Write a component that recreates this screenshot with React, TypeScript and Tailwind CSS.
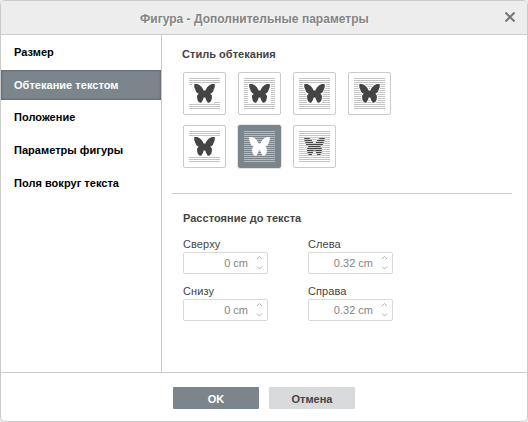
import React from "react";

const BUTTERFLY =
  "M.3 0H3.200Q6 .8 7.600 3Q9 4.800 9.600 6.500H11.400Q12 4.800 13.400 3Q15 .8 17.800 0H20.700Q21.200 2.500 20 5Q19.200 8.200 17.300 9.300L16.200 9.800Q18.200 10.800 18 13Q17.900 16 16.300 18Q14.800 19.200 13.600 18.400Q12 16.800 11.300 13.500H9.700Q9 16.800 7.400 18.400Q6.200 19.200 4.700 18Q3.100 16 3 13Q2.800 10.800 4.800 9.800L3.700 9.300Q1.800 8.200 1 5Q-.2 2.500 .3 0Z";

type Kind = "inline" | "square" | "tight" | "through" | "topbottom" | "front" | "behind";
const kinds: Kind[] = ["inline", "square", "tight", "through", "topbottom", "front", "behind"];

function WrapIcon({ kind }: { kind: Kind }) {
  const active = kind === "front";
  const lines: [number, number, number][] = [];
  for (let i = 0; i < 16; i++) {
    const middle = i >= 3 && i <= 12;
    if (!middle || kind === "tight" || kind === "through" || active || kind === "behind") {
      lines.push([0, i * 2, 31]);
    } else if (kind === "square") {
      lines.push([0, i * 2, 4], [27, i * 2, 4]);
    } else if (kind === "inline" && i === 3) {
      lines.push([0, 6, 3]);
    } else if (kind === "inline" && i === 12) {
      lines.push([25, 24, 6]);
    }
  }
  return (
    <svg width="31" height="31" viewBox="0 0 31 31">
      {lines.map(([x, y, w]) => (
        <rect key={`${x}-${y}`} x={x} y={y} width={w} height="1" fill={active ? "#b5babf" : "#c3c3c3"} />
      ))}
      <g transform="translate(5 6)">
        {kind === "tight" && <path d="M-1 -1H22V3L18.500 11L18 19.500H3L2.500 11L-1 3Z" fill="#fff" />}
        {kind === "through" && <path d={BUTTERFLY} fill="#fff" stroke="#fff" strokeWidth="2" />}
        <path d={BUTTERFLY} fill={active ? "#fff" : "#444"} />
      </g>
      {kind === "behind" &&
        Array.from({ length: 10 }, (_, i) => (
          <rect key={i} x="4" y={6 + i * 2} width="23" height="1" fill="#cbcbcb" />
        ))}
    </svg>
  );
}

function Spinner({ label, value }: { label: string; value: string }) {
  return (
    <label className="block w-[85px]">
      <span className="block h-[15px] text-[11px] leading-[14px] tracking-[0.1px] text-[#444]">{label}</span>
      <span className="flex h-[22px] items-center justify-end rounded-[2px] border border-[#d9d9d9] pr-[4px] text-[11px] leading-[20px] text-[#848484]">
        {value}
        <svg className="ml-[8px]" width="7" height="16" viewBox="0 0 7 16" fill="none" stroke="#b0b0b0">
          <path d="M1 4L3.500 1.500L6 4M1 11.500L3.500 14L6 11.500" />
        </svg>
      </span>
    </label>
  );
}

const sections = ["Размер", "Обтекание текстом", "Положение", "Параметры фигуры", "Поля вокруг текста"];

export default function App() {
  return (
    <div className="h-[422px] w-[528px] bg-[#eee] font-['Liberation_Sans',Arial,sans-serif]">
      <div className="flex h-full flex-col overflow-hidden rounded-[5px] border border-[#cbcbcb] bg-white">
        <header className="flex h-[34px] shrink-0 items-center border-b border-[#cbcbcb] bg-[#ededed] pr-[12px] pl-[139px]">
          <h1 className="mt-[3px] flex-1 text-[12px] font-bold tracking-[0.02px] whitespace-nowrap text-[#848484] [text-shadow:1px_1px_0_#f8f8f8]">
            Фигура - Дополнительные параметры
          </h1>
          <svg className="mb-[1px]" width="10" height="10" viewBox="0 0 10 10" stroke="#777" strokeWidth="2">
            <path d="M.5 .5L9.500 9.500M9.500 .5L.5 9.500" />
          </svg>
        </header>
        <div className="flex h-[338px] shrink-0 border-b border-[#cbcbcb]">
          <nav className="flex w-[161px] shrink-0 flex-col gap-[3px] border-r border-[#cbcbcb] pt-[2px] text-[11px] font-bold tracking-[0.03px]">
            {sections.map((s, i) => (
              <div
                key={s}
                className={
                  i === 1
                    ? "flex h-[30px] items-center bg-[#7d858c] pl-[13px] text-white shadow-[inset_0_0_2px_1px_#646b72]"
                    : i > 1
                      ? "flex h-[30px] items-center pb-[2px] pl-[13px] text-black"
                      : "flex h-[30px] items-center pl-[13px] text-black"
                }
              >
                {s}
              </div>
            ))}
          </nav>
          <main className="flex-1 pt-[12px] pl-[10px] text-[#444]">
            <h2 className="ml-[10px] h-[14px] text-[11px] leading-[14px] font-bold tracking-[0.03px]">Стиль обтекания</h2>
            <div className="mt-[11px] ml-[11px] grid w-[208px] grid-cols-[repeat(4,43px)] gap-x-[12px] gap-y-[10px]">
              {kinds.map((k) => (
                <button
                  key={k}
                  className={
                    k === "front"
                      ? "flex size-[43px] items-start rounded-[2px] border border-[#7d858c] bg-[#7d858c] p-[5px] shadow-[0_0_0_1px_#e6e6e6]"
                      : "flex size-[43px] items-start rounded-[2px] border border-[#cbcbcb] bg-white p-[5px]"
                  }
                >
                  <WrapIcon kind={k} />
                </button>
              ))}
            </div>
            <hr className="mt-[25px] mr-[15px] border-[#cbcbcb]" />
            <h2 className="mt-[17px] ml-[11px] h-[14px] text-[11px] leading-[14px] font-bold tracking-[0.03px]">Расстояние до текста</h2>
            <div className="mt-[12px] ml-[11px] grid grid-cols-[85px_85px] gap-x-[40px] gap-y-[10px]">
              <Spinner label="Сверху" value="0 cm" />
              <Spinner label="Слева" value="0.32 cm" />
              <Spinner label="Снизу" value="0 cm" />
              <Spinner label="Справа" value="0.32 cm" />
            </div>
          </main>
        </div>
        <footer className="flex gap-[10px] pt-[14px] pl-[172px] text-[11px] font-bold">
          <button className="h-[22px] w-[86px] rounded-[1px] bg-[#7d858c] pt-[2px] text-white">OK</button>
          <button className="h-[22px] w-[86px] rounded-[1px] bg-[#d8dadc] pt-[2px] text-[#444]">Отмена</button>
        </footer>
      </div>
    </div>
  );
}
